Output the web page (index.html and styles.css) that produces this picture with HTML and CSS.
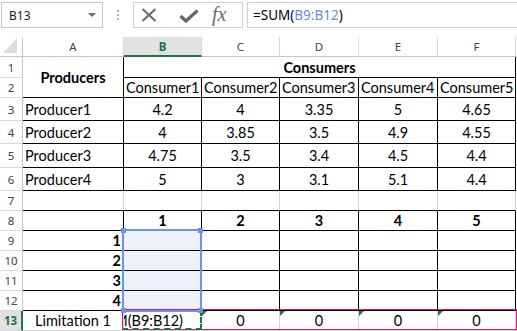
FILE: index.html
```html
<!DOCTYPE html>
<html lang="en">
<head>
    <meta charset="UTF-8">
    <title>Transport problem</title>
    <link rel="stylesheet" href="styles.css">
</head>
<body>
    <div class="formula-bar">
        <div class="name-box"><span>B13</span><span class="caret"></span></div>
        <div class="grip"><i></i><i></i><i></i></div>
        <div class="fx-box">
            <svg class="ico-x" width="16" height="14" viewBox="0 0 16 14"><path d="M1.5 1 L14.5 13 M14.5 1 L1.5 13" stroke="#6a6a6a" stroke-width="2" fill="none"/></svg>
            <svg class="ico-ok" width="20" height="14" viewBox="0 0 20 14"><path d="M1.5 7 L7 12 L18.5 1.5" stroke="#6a6a6a" stroke-width="3.4" fill="none"/></svg>
            <span class="fx">fx</span>
        </div>
        <div class="formula">=SUM(<span class="ref">B9:B12</span>)</div>
    </div>

    <div class="sheet">
        <!-- column headers -->
        <div class="h corner"><svg width="14" height="15" viewBox="0 0 14 15"><polygon points="14,0 14,15 0,15" fill="#dcdcdc"/></svg></div>
        <div class="h">A</div>
        <div class="h sel">B</div>
        <div class="h">C</div>
        <div class="h">D</div>
        <div class="h">E</div>
        <div class="h">F</div>
        <div class="h g"></div>

        <!-- row 1 -->
        <div class="rh">1</div>
        <div class="c ctr b br bb span-r2">Producers</div>
        <div class="c ctr b br bb span-c5">Consumers</div>
        <div class="c g"></div>

        <!-- row 2 -->
        <div class="rh">2</div>
        <div class="c br bb">Consumer1</div>
        <div class="c br bb">Consumer2</div>
        <div class="c br bb">Consumer3</div>
        <div class="c br bb">Consumer4</div>
        <div class="c br bb">Consumer5</div>
        <div class="c g"></div>

        <!-- rows 3-6 -->
        <div class="rh">3</div>
        <div class="c br bb">Producer1</div>
        <div class="c ctr br bb">4.2</div>
        <div class="c ctr br bb">4</div>
        <div class="c ctr br bb">3.35</div>
        <div class="c ctr br bb">5</div>
        <div class="c ctr br bb">4.65</div>
        <div class="c g"></div>

        <div class="rh">4</div>
        <div class="c br bb">Producer2</div>
        <div class="c ctr br bb">4</div>
        <div class="c ctr br bb">3.85</div>
        <div class="c ctr br bb">3.5</div>
        <div class="c ctr br bb">4.9</div>
        <div class="c ctr br bb">4.55</div>
        <div class="c g"></div>

        <div class="rh">5</div>
        <div class="c br bb">Producer3</div>
        <div class="c ctr br bb">4.75</div>
        <div class="c ctr br bb">3.5</div>
        <div class="c ctr br bb">3.4</div>
        <div class="c ctr br bb">4.5</div>
        <div class="c ctr br bb">4.4</div>
        <div class="c g"></div>

        <div class="rh">6</div>
        <div class="c br bb">Producer4</div>
        <div class="c ctr br bb">5</div>
        <div class="c ctr br bb">3</div>
        <div class="c ctr br bb">3.1</div>
        <div class="c ctr br bb">5.1</div>
        <div class="c ctr br bb">4.4</div>
        <div class="c g"></div>

        <!-- row 7 -->
        <div class="rh">7</div>
        <div class="c bb"></div>
        <div class="c bb"></div>
        <div class="c bb"></div>
        <div class="c bb"></div>
        <div class="c bb"></div>
        <div class="c bb"></div>
        <div class="c g"></div>

        <!-- row 8 -->
        <div class="rh">8</div>
        <div class="c br bb"></div>
        <div class="c ctr b br bb">1</div>
        <div class="c ctr b br bb">2</div>
        <div class="c ctr b br bb">3</div>
        <div class="c ctr b br bb">4</div>
        <div class="c ctr b br bb">5</div>
        <div class="c g"></div>

        <!-- rows 9-12 -->
        <div class="rh">9</div>
        <div class="c rt b br bb">1</div>
        <div class="c picked br bb"></div>
        <div class="c br bb"></div>
        <div class="c br bb"></div>
        <div class="c br bb"></div>
        <div class="c br bb"></div>
        <div class="c g"></div>

        <div class="rh">10</div>
        <div class="c rt b br bb">2</div>
        <div class="c picked br bb"></div>
        <div class="c br bb"></div>
        <div class="c br bb"></div>
        <div class="c br bb"></div>
        <div class="c br bb"></div>
        <div class="c g"></div>

        <div class="rh">11</div>
        <div class="c rt b br bb">3</div>
        <div class="c picked br bb"></div>
        <div class="c br bb"></div>
        <div class="c br bb"></div>
        <div class="c br bb"></div>
        <div class="c br bb"></div>
        <div class="c g"></div>

        <div class="rh">12</div>
        <div class="c rt b br bb">4</div>
        <div class="c picked br bb"></div>
        <div class="c br bb"></div>
        <div class="c br bb"></div>
        <div class="c br bb"></div>
        <div class="c br bb"></div>
        <div class="c g"></div>

        <!-- row 13 -->
        <div class="rh sel">13</div>
        <div class="c ctr">Limitation 1</div>
        <div class="c edit"><span>=SUM(B9:B12)</span></div>
        <div class="c ctr err">0</div>
        <div class="c ctr err">0</div>
        <div class="c ctr err">0</div>
        <div class="c ctr err">0</div>
        <div class="c g"></div>

        <!-- overlays -->
        <div class="range-ring"></div>
        <div class="active-ring"></div>
        <div class="ref-ring">
            <i class="hd tl"></i><i class="hd tr"></i><i class="hd bl"></i><i class="hd br2"></i>
        </div>
    </div>
</body>
</html>
```

FILE: styles.css
```css
/* Page */
body {
    margin: 0;
    width: 517px;
    height: 331px;
    overflow: hidden;
    background: #ffffff;
    font-family: Lato, "Liberation Sans", sans-serif;
    color: #000000;
}

/* Formula bar */
.formula-bar {
    display: flex;
    height: 37px;
    padding-top: 2px;
    box-sizing: border-box;
}

.name-box {
    margin-left: 1px;
    width: 102px;
    height: 26px;
    box-sizing: border-box;
    border: 1px solid #c6c6c6;
    display: flex;
    align-items: center;
    justify-content: space-between;
    padding: 0 6px 0 7px;
    font: 12px "Noto Sans", sans-serif;
    color: #222222;
}

.caret {
    width: 0;
    height: 0;
    border-left: 4px solid transparent;
    border-right: 4px solid transparent;
    border-top: 4px solid #6a6a6a;
}

.grip {
    width: 30px;
    height: 26px;
    display: flex;
    flex-direction: column;
    align-items: center;
    justify-content: center;
    gap: 2px;
}

.grip i {
    width: 2px;
    height: 2px;
    background: #b4b4b4;
}

.fx-box {
    width: 110px;
    height: 26px;
    box-sizing: border-box;
    border: 1px solid #d0d0d0;
    display: flex;
    align-items: center;
    padding-left: 7px;
}

.ico-x {
    margin-right: 22px;
}

.ico-ok {
    margin-right: 13px;
    margin-top: 2px;
}

.fx {
    font: italic 20px "Liberation Serif", serif;
    color: #6a6a6a;
    margin-top: -2px;
}

.formula {
    margin-left: 4px;
    flex: 1;
    height: 26px;
    box-sizing: border-box;
    border: 1px solid #d0d0d0;
    border-right: none;
    padding-left: 5px;
    display: flex;
    align-items: center;
    font: 13.5px "Noto Sans", sans-serif;
    white-space: pre;
}

.formula .ref {
    color: #6b8ed8;
}

/* Sheet grid */
.sheet {
    position: relative;
    display: grid;
    grid-template-columns: 23px 101px 78px 78px 79px 79px 78px minmax(0, 1fr);
    grid-template-rows: 20px 21px 20px 23px 23px 24px 23px repeat(7, 20px);
}

.h,
.rh,
.c {
    box-sizing: border-box;
    display: flex;
    align-items: center;
    white-space: nowrap;
    overflow: hidden;
    min-width: 0;
}

.h {
    justify-content: center;
    border-right: 1px solid #dadada;
    border-bottom: 1px solid #c6c6c6;
    font: 11.5px "Noto Sans", sans-serif;
    color: #444444;
}

.h.corner {
    align-items: flex-end;
    justify-content: flex-end;
    padding: 0 5px 3px 0;
    border-right-color: #c6c6c6;
}

.h.sel {
    background: #e1e1e1;
    color: #217346;
    font-weight: bold;
    border-bottom: 2px solid #217346;
}

.rh {
    justify-content: center;
    border-right: 1px solid #c6c6c6;
    border-bottom: 1px solid #dadada;
    font: 11.5px "Noto Sans", sans-serif;
    color: #444444;
}

.rh.sel {
    background: #e1e1e1;
    color: #217346;
    font-weight: bold;
    border-right: 2px solid #217346;
}

.c {
    position: relative;
    padding: 0 2px;
    border-right: 1px solid #d4d4d4;
    border-bottom: 1px solid #d4d4d4;
    font-size: 14.5px;
}

.g {
    padding: 0;
    border-right: none;
}

.span-r2 {
    grid-row: span 2;
}

.span-c5 {
    grid-column: span 5;
}

.ctr {
    justify-content: center;
}

.rt {
    justify-content: flex-end;
}

.b {
    font-weight: bold;
}

.br {
    border-right-color: #000000;
}

.bb {
    border-bottom-color: #000000;
}

.picked {
    background: #edf1fc;
}

/* cell in edit mode: tail of the formula shows */
.edit {
    justify-content: flex-end;
    padding-right: 18px;
}

.edit span {
    flex-shrink: 0;
}

/* error indicator */
.err::before {
    content: "";
    position: absolute;
    top: 0;
    left: 0;
    border-top: 5px solid #1f7a37;
    border-right: 5px solid transparent;
}

/* Overlays */
.range-ring {
    position: absolute;
    left: 122px;
    top: 272px;
    width: 395px;
    height: 21px;
    box-sizing: border-box;
    border: 1px solid #d6187f;
}

.active-ring {
    position: absolute;
    left: 122px;
    top: 273px;
    width: 80px;
    height: 20px;
    box-sizing: border-box;
    border: 2px dashed #217346;
    border-left-color: transparent;
}

.ref-ring {
    position: absolute;
    left: 122px;
    top: 192px;
    width: 80px;
    height: 83px;
    box-sizing: border-box;
    border: 2px solid #6e92e6;
}

.hd {
    position: absolute;
    width: 5px;
    height: 5px;
    background: #6e92e6;
}

.hd.tl { left: -3px; top: -3px; }
.hd.tr { right: -3px; top: -3px; }
.hd.bl { left: -3px; bottom: -3px; }
.hd.br2 { right: -3px; bottom: -3px; }
```
